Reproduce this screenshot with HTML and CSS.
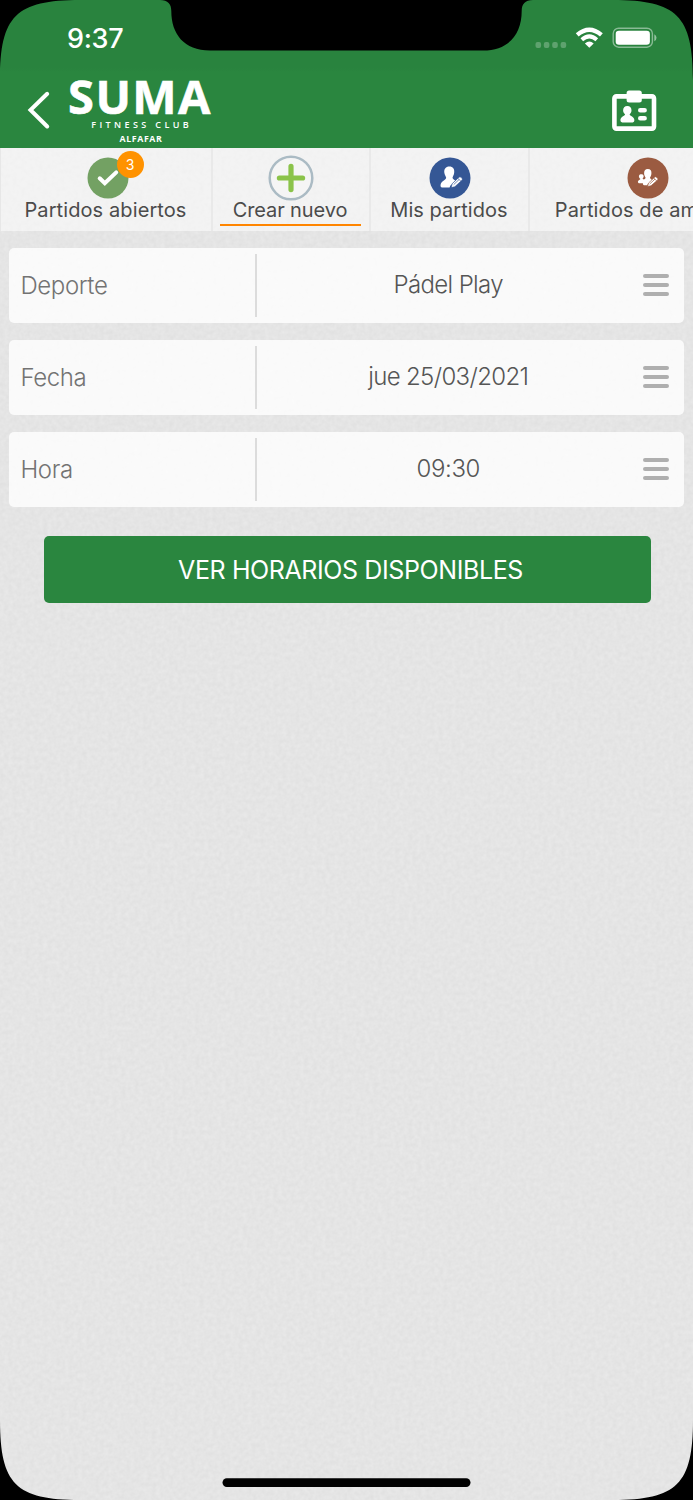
FILE: index.html
```html
<!DOCTYPE html>
<html lang="es">
<head>
<meta charset="utf-8">
<title>Crear nuevo partido</title>
<link rel="stylesheet" href="styles.css">
</head>
<body>
<div class="phone">
  <svg class="texture" width="693" height="1352" aria-hidden="true">
    <filter id="paper" x="0" y="0" width="100%" height="100%" color-interpolation-filters="sRGB">
      <feTurbulence type="fractalNoise" baseFrequency="0.23" numOctaves="2" seed="4"/>
      <feColorMatrix type="matrix" values="0.045 0 0 0 0.874  0.045 0 0 0 0.874  0.045 0 0 0 0.874  0 0 0 0 1"/>
    </filter>
    <rect width="693" height="1352" filter="url(#paper)"/>
  </svg>

  <header class="header">
    <div class="statusbar">
      <span class="clock">9:37</span>
      <svg class="status-icons" width="124" height="24" viewBox="534 26 124 24">
        <g fill="#fff" fill-opacity=".25">
          <rect x="535.5" y="42" width="5.6" height="6" rx="2"/><rect x="543.8" y="42" width="5.6" height="6" rx="2"/><rect x="552.2" y="42" width="5.6" height="6" rx="2"/><rect x="560.6" y="42" width="5.6" height="6" rx="2"/>
        </g>
        <g fill="none" stroke="#fff">
          <path d="M577.2 34.9Q589.3 24.6 601.4 34.9" stroke-width="4.3"/>
          <path d="M581.8 39.7Q589.3 33.2 596.8 39.7" stroke-width="4"/>
        </g>
        <path d="M584.9 43.5Q589.3 39.5 593.700 43.5L589.3 47.8Z" fill="#fff"/>
        <rect x="613.2" y="28.2" width="39.2" height="19" rx="5.5" fill="none" stroke="#fff" stroke-opacity=".45" stroke-width="1.4"/>
        <rect x="615.7" y="30.7" width="34.2" height="14" rx="3.3" fill="#fff"/>
        <path d="M654.3 34.2Q656.5 35.2 656.5 37.8T654.3 41.3Z" fill="#fff" fill-opacity=".5"/>
      </svg>
    </div>
    <div class="navbar">
      <svg class="back" width="24" height="40" viewBox="27 90 24 40"><path d="M47.2 93.8L30.5 110L47.2 126.5" fill="none" stroke="#fff" stroke-width="4" stroke-linecap="round"/></svg>
      <div class="brand">
        <span class="brand-name">SUMA</span>
        <span class="brand-sub">FITNESS CLUB</span>
        <span class="brand-place">ALFAFAR</span>
      </div>
      <svg class="card" width="46" height="42" viewBox="611 90 46 42">
        <rect x="614.4" y="96.4" width="39.6" height="32.2" rx="2" fill="none" stroke="#fff" stroke-width="4.6"/>
        <rect x="626.6" y="90.5" width="15.2" height="12" rx="2.5" fill="#fff"/>
        <path d="M627.3 106C630 106 631.7 108 631.5 110.7C631.4 112.5 630.2 113.5 629.6 114.5C629.8 116.3 634.4 116.2 634.4 120.3Q634.4 122.4 632.7 122.4H622.2Q620.4 122.4 620.4 120.3C620.4 116.2 624.8 116.3 625.1 114.5C624.5 113.5 623.2 112.5 623.1 110.7C623 108 624.7 106 627.3 106Z" fill="#fff"/>
        <path d="M640.3 110.2H644.6M640.3 118.3H644.6" stroke="#fff" stroke-width="4.6" stroke-linecap="round"/>
      </svg>
    </div>
  </header>

  <nav class="tabs">
    <div class="tab tab-open">
      <span class="tab-icon"><svg width="42" height="42" viewBox="-21 -21 42 42"><circle r="20.5" fill="#73a163"/><path d="M-8.3 .3L-3.2 5.3L8.2-5.6" fill="none" stroke="#fff" stroke-width="4" stroke-linecap="round" stroke-linejoin="miter"/></svg><b class="badge">3</b></span>
      <span class="tab-label">Partidos abiertos</span>
    </div>
    <div class="tab tab-new active">
      <span class="tab-icon"><svg width="46" height="46" viewBox="-23 -23 46 46"><circle r="21.3" fill="#f5f5f5" stroke="#abbbc4" stroke-width="2.5"/><path d="M0-11.6V11.6M-11.6 0H11.6" stroke="#8bc34a" stroke-width="5.2" stroke-linecap="round"/></svg></span>
      <span class="tab-label">Crear nuevo</span>
    </div>
    <div class="tab tab-mine">
      <span class="tab-icon"><svg width="42" height="42" viewBox="-21 -21 42 42"><circle r="20.5" fill="#355795"/><path d="M-.7-11.5C3-11.5 4.6-9 4.2-5.5C4-3 2.8-1.6 2.5-.3C2.7 1.2 4.7 2 5.6 2.700L.2 7.8L-.4 9.5H-8Q-9.5 9.5-9.5 7.7C-9.3 2.8-4.4 2.7-3.8-.3C-4.1-1.6-5.4-3-5.7-5.5C-6-9-4.2-11.5-.7-11.5Z" fill="#fff"/><path d="M1.1 9.6L2.2 5.7L9-.8Q10-1.8 11.1-.7L12 .3Q12.8 1.3 12 2.2L4.8 8.8Z" fill="#fff" stroke="#355795" stroke-width=".7"/><path d="M3.7 6.6L9.1 1.5M7.8 .2L11 3.4" stroke="#355795" stroke-width=".7"/></svg></span>
      <span class="tab-label">Mis partidos</span>
    </div>
    <div class="tab tab-friends">
      <span class="tab-icon"><svg width="42" height="42" viewBox="-21 -21 42 42"><circle r="20.5" fill="#9b5b41"/><path d="M-.2-9C2.5-9 3.8-7 3.4-4.3C3.3-2.3 2.3-1.3 2-.2C2.2 1 3.7 1.5 4.5 2.2L-.1 6L-.8 7.2H-4Q-5.1 7.2-5.1 5.8L-5 5.2H-9.2Q-10.3 5-10.1 3.6C-9.9 2.1-7.8 1.7-7.6 1C-8.7 0-9.4-1.2-9-2.3C-8.4-4-5.1-4.2-4.4-2.3C-4.1-1.3-4.7-.2-5.5 .6L-4.4 1.6C-3.1 1-2.5 .7-2.4-.2C-2.8-1.3-3.8-2.5-3.9-4.3C-4.1-7-2.8-9-.2-9Z" fill="#fff"/><path d="M-.5 8.5L.5 5.1L6.6-.8Q7.6-1.7 8.5-.8L9.6 .3Q10.4 1.2 9.6 2.1L3 7.8Z" fill="#fff" stroke="#9b5b41" stroke-width=".7"/><path d="M1.7 6L7 1.1M5.7 0L8.8 2.9" stroke="#9b5b41" stroke-width=".7"/></svg></span>
      <span class="tab-label">Partidos de amigos</span>
    </div>
  </nav>

  <main class="form">
    <div class="field"><span class="field-name">Deporte</span><span class="field-value">Pádel Play</span><span class="menu"><i></i><i></i><i></i></span></div>
    <div class="field"><span class="field-name">Fecha</span><span class="field-value value-date">jue 25/03/2021</span><span class="menu"><i></i><i></i><i></i></span></div>
    <div class="field"><span class="field-name">Hora</span><span class="field-value value-time">09:30</span><span class="menu"><i></i><i></i><i></i></span></div>
    <button class="submit" type="button"><span>VER HORARIOS DISPONIBLES</span></button>
  </main>

  <svg class="bezel" width="693" height="1500" viewBox="0 0 693 1500" aria-hidden="true">
    <path d="M0 0H80C16 0 0 16 0 80ZM693 0H613C677 0 693 16 693 80ZM0 1500H80C16 1500 0 1484 0 1420ZM693 1500H613C677 1500 693 1484 693 1420Z"/>
    <path d="M160 0C168 0 171.300 4 171.300 11C171.300 34 184 50.500 210 50.500H483C509 50.500 521.700 34 521.700 11C521.700 4 525 0 533 0Z"/>
    <rect x="222.500" y="1478.300" width="248" height="8.600" rx="4.300"/>
  </svg>
</div>
</body>
</html>
```
FILE: styles.css
```css
* { box-sizing: border-box; }
body { margin: 0; background: #000; font-family: Inter, "Liberation Sans", sans-serif; }
.phone { position: relative; width: 693px; height: 1500px; overflow: hidden; background: #e5e5e5; display: flex; flex-direction: column; isolation: isolate; }
.texture { position: absolute; left: 0; top: 148px; z-index: -1; }
.bezel { position: absolute; left: 0; top: 0; pointer-events: none; }

.header { height: 147.5px; flex: none; background: linear-gradient(#29833e 0 68px, #2a863f 72px); color: #fff; }
.statusbar { height: 76px; display: flex; justify-content: space-between; padding: 26px 35px 0 67px; }
.clock { font-size: 27px; line-height: 25px; font-weight: 500; letter-spacing: -.3px; }
.navbar { height: 71px; display: flex; align-items: flex-start; padding: 0 36px 0 27px; }
.back { margin-top: 14px; }
.brand { width: 146px; margin-left: 16px; display: flex; flex-direction: column; align-items: center; font-family: "Open Sans", "Noto Sans", sans-serif; white-space: nowrap; }
.brand-name { font-size: 47px; line-height: 42px; font-weight: 700; letter-spacing: 1.4px; margin: -1.500px 0 1.500px; -webkit-text-stroke: .6px #fff; }
.brand-sub { font-size: 9px; line-height: 13px; font-weight: 600; letter-spacing: 3.4px; margin: 0 -3.4px 0 0; }
.brand-place { font-size: 8.8px; line-height: 16px; font-weight: 700; letter-spacing: .6px; padding-left: 2px; }
.card { margin: 14px 0 0 auto; }

.tabs { display: flex; height: 83px; flex: none; background: rgba(255,255,255,.52); color: #4b4b4b; border-left: 1px solid #e7e7e7; }
.tab { flex: none; display: flex; flex-direction: column; align-items: center; border-right: 2px solid #e9e9e9; white-space: nowrap; }
.tab-open { width: 212px; padding-right: 1px; }
.tab-open .tab-icon { margin-left: 5px; }
.tab-new { width: 158px; }
.tab-mine { width: 159px; }
.tab-friends { width: 238px; }
.tab-icon { position: relative; height: 61px; display: flex; align-items: center; margin-bottom: -11px; }
.tab-label { position: relative; font-size: 20px; line-height: 24px; letter-spacing: .1px; }
.tab-new .tab-label { letter-spacing: -.1px; margin-right: 2px; }
.tab-mine .tab-label { letter-spacing: .05px; margin-right: 1px; }
.tab-friends .tab-label { margin-right: 3px; }
.active::after { content: ""; width: 141px; height: 2px; background: #ff8500; margin: 2.500px 2px 0 0; }
.badge { position: absolute; left: 29.500px; top: 3px; width: 27px; height: 27px; border-radius: 50%; background: #ff9200; color: #fff; text-align: center; font-size: 14px; line-height: 27px; font-weight: 400; }

.form { padding: 17.500px 9px 0; display: flex; flex-direction: column; gap: 17px; }
.field { height: 75px; display: flex; align-items: center; border-radius: 5px; background: rgba(255,255,255,.8); font-size: 24px; font-weight: 300; }
.field-name { width: 248px; height: 63px; line-height: 63px; padding-left: 11.500px; border-right: 2px solid #dcdcdc; color: #737373; letter-spacing: -.4px; }
.field-value { flex: 1; text-align: center; color: #555; padding: 0 3px 2px 0; letter-spacing: -.65px; }
.value-date { letter-spacing: -.65px; }
.value-time { letter-spacing: -.4px; }
.menu { width: 41.500px; display: flex; flex-direction: column; gap: 4.700px; margin-top: -1px; }
.menu i { width: 26px; height: 4px; border-radius: 2px; background: #afafaf; }
.submit { height: 67px; width: 607px; margin: 12px 0 0 34.500px; padding: 0 0 0 7px; border: 0; border-radius: 5px; background: #2a863f; color: #fff; font: 400 25px Inter, "Liberation Sans", sans-serif; letter-spacing: -.4px; }
```
